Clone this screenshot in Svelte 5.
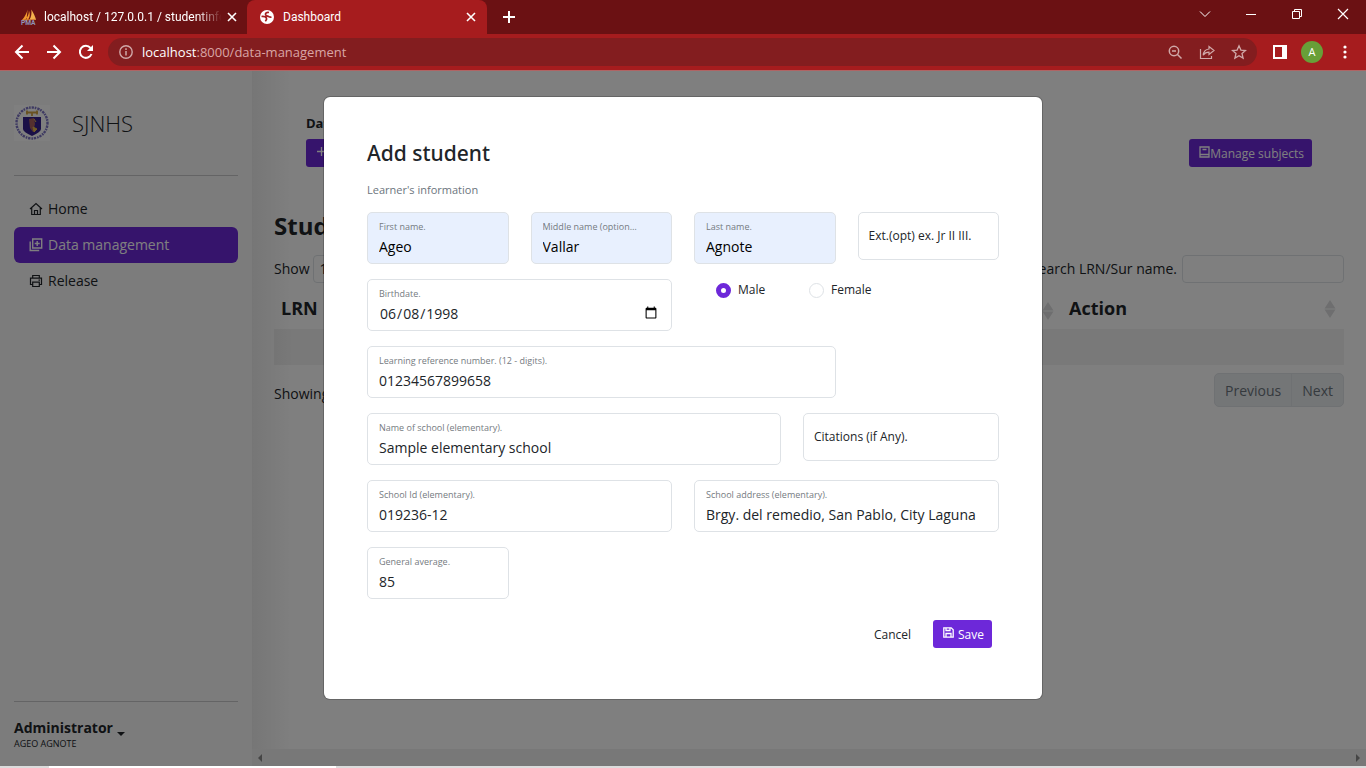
<script>
  let gender = $state('male');
  let birthdate = $state('1998-06-08');

  const names = [
    { id: 'first', label: 'First name.', value: 'Ageo' },
    { id: 'middle', label: 'Middle name (optional).', value: 'Vallar' },
    { id: 'last', label: 'Last name.', value: 'Agnote' }
  ];
</script>

{#snippet field(id, label, value, span, filled = false)}
  <div class="field span-{span}" class:filled class:empty={!value}>
    <label for={id}>{label}</label>
    <input {id} type="text" {value} />
  </div>
{/snippet}

{#snippet sorter()}
  <svg class="sorter" viewBox="0 0 12 18" aria-hidden="true"><path d="M6 0l5.500 8.500H.5zM6 18l5.500-8.500H.5z" /></svg>
{/snippet}

<div class="browser">
  <header class="tabs">
    <div class="tab first">
      <svg class="favicon" viewBox="0 0 18 18" aria-hidden="true">
        <path d="M8 1C7 5 5.500 8 2 12.500l5-1zM9.500 2c1.500 4 1 7-1 10H5.500C8 9 9.500 6 9.500 2z" fill="#f29a2e" />
        <path d="M12 1c2.500 4 4 7 5 11h-7c2-3 2.500-7 2-11z" fill="#f6b04d" />
        <path d="M2 12.500l14-1" stroke="#d9803a" />
        <text x="1" y="17.500" font-size="7" font-weight="700" fill="#9094b8">PMA</text>
      </svg>
      <span class="tab-title fade">localhost / 127.0.0.1 / studentinfo</span>
      <button class="plain" aria-label="Close tab"><svg width="10" height="10" viewBox="0 0 10 10"><path d="M1 1l8 8M9 1l-8 8" /></svg></button>
    </div>
    <div class="tab active">
      <svg class="globe" viewBox="0 0 16 16" aria-hidden="true">
        <circle cx="8" cy="8" r="7" fill="#fff" />
        <path d="M10 3.500C8 3 6.300 4 6.500 5.500S8.500 7 9.500 7.500s2 .8 3 .5M2.500 7.500c2.500-.2 4.500.5 5 1.800s-.3 2-1.200 3" stroke="#a61c1e" stroke-width="1.700" fill="none" />
      </svg>
      <span class="tab-title">Dashboard</span>
      <button class="plain" aria-label="Close tab"><svg width="10" height="10" viewBox="0 0 10 10"><path d="M1 1l8 8M9 1l-8 8" /></svg></button>
    </div>
    <button class="plain new" aria-label="New tab"><svg width="12" height="12" viewBox="0 0 12 12"><path d="M6 0v12M0 6h12" stroke-width="2" /></svg></button>
    <div class="window">
      <button class="plain" aria-label="Search tabs"><svg width="12" height="12" viewBox="0 0 12 12"><path d="M1 3.500l5 5 5-5" stroke-width="1" /></svg></button>
      <button class="plain" aria-label="Minimize"><svg width="12" height="12" viewBox="0 0 12 12"><path d="M1 6.500h10" stroke-width="1" /></svg></button>
      <button class="plain" aria-label="Restore"><svg width="12" height="12" viewBox="0 0 12 12"><path d="M1.500 3.500h7v7h-7zM3.500 3.500v-2h7v7h-2" stroke-width="1" /></svg></button>
      <button class="plain" aria-label="Close"><svg width="12" height="12" viewBox="0 0 12 12"><path d="M1 1l10 10M11 1L1 11" stroke-width="1.200" /></svg></button>
    </div>
  </header>

  <div class="toolbar">
    <button class="plain" aria-label="Back"><svg width="16" height="16" viewBox="0 0 16 16"><path d="M15 8H2M8.500 1.500L2 8l6.500 6.500" stroke-width="2" /></svg></button>
    <button class="plain" aria-label="Forward"><svg width="16" height="16" viewBox="0 0 16 16"><path d="M1 8h13M7.500 1.500L14 8l-6.500 6.500" stroke-width="2" /></svg></button>
    <button class="plain" aria-label="Reload"><svg width="16" height="16" viewBox="0 0 16 16"><path d="M13.500 10A6 6 0 1 1 12.500 4" stroke-width="2" /><path d="M15 1v6H9z" fill="#fff" stroke="none" /></svg></button>
    <div class="omnibox">
      <svg class="soft" width="14" height="14" viewBox="0 0 14 14" aria-hidden="true"><circle cx="7" cy="7" r="6.200" stroke-width="1.400" /><path d="M7 6v4.500M7 3.300v1.600" stroke-width="1.500" /></svg>
      <span class="url">localhost<span>:8000/data-management</span></span>
      <button class="plain soft" aria-label="Zoom"><svg width="16" height="16" viewBox="0 0 16 16"><circle cx="7" cy="7" r="4.700" stroke-width="1.500" /><path d="M5 7h4M10.500 10.500l4 4" stroke-width="1.500" /></svg></button>
      <button class="plain soft" aria-label="Share"><svg width="16" height="16" viewBox="0 0 16 16"><path d="M1.500 5v9.500h11V12" stroke-width="1.200" /><path d="M10 2.500l5 4-5 4V8.200c-3 0-4.500 1-5.800 3 .3-3.500 2.300-5.800 5.800-6.200z" stroke-width="1.200" /></svg></button>
      <button class="plain soft" aria-label="Bookmark"><svg width="16" height="16" viewBox="0 0 16 16"><path d="M8 1.800l1.900 4.300 4.600.4-3.500 3 1.100 4.600L8 11.700l-4.100 2.400L5 9.500l-3.500-3 4.600-.4z" stroke-width="1.300" /></svg></button>
    </div>
    <button class="plain" aria-label="Side panel"><svg width="14" height="14" viewBox="0 0 14 14"><path d="M1 1h12v12H1z" stroke-width="2" /><path d="M9 1h4v12H9z" fill="#fff" stroke="none" /></svg></button>
    <button class="avatar">A</button>
    <button class="plain" aria-label="Menu"><svg width="4" height="14" viewBox="0 0 4 14"><g fill="#fff" stroke="none"><circle cx="2" cy="2" r="1.600" /><circle cx="2" cy="7" r="1.600" /><circle cx="2" cy="12" r="1.600" /></g></svg></button>
  </div>

  <div class="page">
    <aside>
      <div class="brand">
        <svg class="seal" viewBox="0 0 36 36" aria-hidden="true">
          <path d="M0 0h36v36H0z" fill="#fff" />
          <circle cx="18" cy="18" r="15.500" fill="none" stroke="#7d75c4" stroke-width="2.400" stroke-dasharray="1.600 1 2.400 .8" />
          <path d="M12 7.500h12M13 5.500v4M23 5.500v4M18 8v3" stroke="#d2a544" stroke-width="1.800" />
          <path d="M9 12h18v12q0 3-9 7-9-4-9-7z" fill="#34208f" />
          <path d="M15 14l5-1 1 6-2 8-3-4z" fill="#a8615e" />
          <path d="M19 22l4 2-3 3zM20 14l2 3" fill="#e4b84a" stroke="#e4b84a" />
        </svg>
        <span>SJNHS</span>
      </div>
      <nav>
        <a href="#home">
          <svg viewBox="0 0 14 14" aria-hidden="true"><path d="M1 7l6-5.500L13 7M2.700 6v6.500h8.600V6M5.500 12.500V8.500h3v4" /></svg>
          Home
        </a>
        <a href="#data" class="current">
          <svg viewBox="0 0 14 14" aria-hidden="true"><path d="M3.700 1h9v9h-9zM1.200 3.500v9h9M8.200 3v5M5.700 5.500h5" stroke-width="1.400" /></svg>
          Data management
        </a>
        <a href="#release">
          <svg viewBox="0 0 14 14" aria-hidden="true"><path d="M3.700 4V1.500h6.600V4M3.700 10.500H1.500V4.200h11v6.300h-2.200M3.700 8.200h6.600v4.300H3.700zM9.500 6.200h1.500" /></svg>
          Release
        </a>
      </nav>
      <button class="account"><strong>Administrator</strong><i></i><small>AGEO AGNOTE</small></button>
    </aside>

    <main>
      <div class="content">
        <div class="actions">
          <div>
            <h6>Data</h6>
            <button class="btn" aria-label="Add student"><svg width="11" height="11" viewBox="0 0 11 11"><path d="M5.500 1v9M1 5.500h9" /></svg></button>
          </div>
          <button class="btn"><svg width="11" height="12" viewBox="0 0 11 12"><path d="M1 1h9v10H1zM1 8.500h9M3.500 3.500h4" /></svg>Manage subjects</button>
        </div>
        <h2>Students</h2>
        <div class="filters">
          <label>Show <select><option>10</option></select></label>
          <label>Search LRN/Sur name. <input type="search" /></label>
        </div>
        <table>
          <thead><tr><th class="lrn">LRN</th><th>{@render sorter()}</th><th class="last">Action {@render sorter()}</th></tr></thead>
          <tbody><tr><td colspan="3"></td></tr></tbody>
        </table>
        <div class="pager">
          <span>Showing</span>
          <div><button>Previous</button><button>Next</button></div>
        </div>
      </div>
      <div class="scrollbar"><i></i><i class="right"></i></div>
    </main>

    <div class="backdrop">
      <form class="modal" role="dialog" aria-labelledby="title">
        <h1 id="title">Add student</h1>
        <p>Learner's information</p>
        <div class="grid">
          {#each names as f}
            {@render field(f.id, f.label, f.value, 3, true)}
          {/each}
          {@render field('ext', 'Ext.(opt) ex. Jr II III.', '', 3)}
          <div class="field span-6">
            <label for="birth">Birthdate.</label>
            <input id="birth" type="date" bind:value={birthdate} />
          </div>
          <div class="radios span-6">
            <label><input type="radio" value="male" bind:group={gender} />Male</label>
            <label><input type="radio" value="female" bind:group={gender} />Female</label>
          </div>
          {@render field('lrn', 'Learning reference number. (12 - digits).', '01234567899658', 9)}
          {@render field('school', 'Name of school (elementary).', 'Sample elementary school', 8)}
          {@render field('citations', 'Citations (if Any).', '', 4)}
          {@render field('schoolid', 'School Id (elementary).', '019236-12', 6)}
          {@render field('address', 'School address (elementary).', 'Brgy. del remedio, San Pablo, City Laguna', 6)}
          {@render field('average', 'General average.', '85', 3)}
        </div>
        <footer>
          <button type="button" class="btn cancel">Cancel</button>
          <button type="button" class="btn save"><svg width="11" height="11" viewBox="0 0 11 11"><path d="M.8.8h7.400l2 2v7.400H.8zM3 .8v2.700h4V.8M3 10V6.500h5V10" /></svg>Save</button>
        </footer>
      </form>
    </div>
  </div>
  <div class="taskbar"><i></i></div>
</div>

<style>
  :global(body) { margin: 0; }
  .browser { min-height: 100vh; display: flex; flex-direction: column; font-family: "Open Sans", "Noto Sans", sans-serif; font-size: 14px; color: #212529; }
  .browser * { box-sizing: border-box; }
  button, input, select { font: inherit; color: inherit; }
  svg { fill: none; stroke: currentColor; flex: none; }
  .plain { background: none; border: 0; padding: 0; display: flex; align-items: center; justify-content: center; color: #fff; }
  .plain svg, .soft { stroke-width: 1.600; }

  .tabs { height: 34px; display: flex; background: #6b1113; color: #fff; font-family: Roboto, sans-serif; font-size: 12px; }
  .tab { width: 240px; display: flex; align-items: center; padding: 0 11px 0 12px; }
  .tab.first { width: 247px; padding: 0 10px 0 20px; }
  .tab.active { background: #a61c1e; border-radius: 8px 8px 0 0; }
  .tab-title { flex: 1; min-width: 0; overflow: hidden; white-space: nowrap; margin: 0 8px; line-height: 18px; }
  .fade { margin: 0 0 0 7px; mask-image: linear-gradient(90deg, #000 84%, transparent 97%); }
  .favicon { width: 17px; height: 18px; stroke: none; }
  .globe { width: 16px; height: 16px; stroke: none; }
  .new { width: 44px; }
  .window { margin-left: auto; display: flex; align-items: center; height: 28px; }
  .window button { width: 46px; height: 28px; }

  .toolbar { height: 37px; display: flex; align-items: center; padding: 0 13px 0 14px; gap: 16px; background: #a61c1e; border-bottom: 1px solid #b06464; }
  .omnibox { flex: 1; height: 28px; border-radius: 14px; background: #831d1f; display: flex; align-items: center; padding: 0 10px 0 11px; gap: 16px; margin-left: -2px; }
  .url { flex: 1; color: #fff; font-size: 13px; margin-left: -7px; }
  .url span { color: #d9a5a5; }
  .soft { color: #d0a8a8; }
  .avatar { width: 22px; height: 22px; padding: 0; border: 0; border-radius: 50%; background: #689f38; color: #fff; font-size: 11px; line-height: 22px; margin: 0 2px 0 -2px; }
  .toolbar > .plain:last-child { width: 16px; margin-left: -4px; }

  .page { flex: 1; display: flex; position: relative; background: #fff; }
  aside { width: 252px; padding: 0 14px; background: #f8f8f9; display: flex; flex-direction: column; }
  .brand { height: 105px; display: flex; align-items: center; gap: 22px; border-bottom: 1px solid #c8c9ca; font-size: 22px; font-weight: 300; }
  .seal { width: 36px; height: 36px; stroke: none; }
  nav { padding-top: 15px; }
  nav a { display: flex; align-items: center; gap: 5px; height: 36px; padding: 0 15px 1px; border-radius: 6px; color: inherit; text-decoration: none; }
  nav svg { width: 14px; height: 14px; stroke-width: 1.200; }
  .current { background: #6d28d9; color: #fff; }
  .account { margin-top: auto; height: 65px; border: 0; border-top: 1px solid #c8c9ca; background: none; padding: 0; text-align: left; line-height: 20px; }
  .account i { display: inline-block; border: 4px solid transparent; border-top-color: #212529; border-bottom: 0; margin-left: 4px; vertical-align: -3px; }
  .account small { display: block; font-size: 9px; line-height: 12px; }

  main { flex: 1; min-width: 0; display: flex; flex-direction: column; background: linear-gradient(90deg, #ededed, #fff 40px); }
  .content { flex: 1; padding: 42px 22px 0; }
  .actions { display: flex; justify-content: space-between; align-items: flex-end; padding: 0 32px; }
  h6 { margin: 0 0 6px; font-size: 13px; line-height: 20px; }
  h2 { margin: 43px 0 13px; font-size: 24px; line-height: 32px; }
  .btn { display: flex; align-items: center; height: 28px; padding: 0 8px 0 10px; border: 0; border-radius: 3px; background: #6d28d9; color: #fff; font-size: 12px; }
  .btn svg { margin-bottom: 3px; stroke-width: 1.300; }
  .filters, .pager { display: flex; justify-content: space-between; align-items: center; }
  .filters label { display: flex; align-items: center; gap: 5px; line-height: 26px; }
  .filters label:first-child { gap: 3px; }
  .filters select, .filters input { height: 28px; border: 1px solid #dee2e6; border-radius: 4px; background: #fff; }
  .filters select { width: 54px; padding: 0 6px; appearance: none; }
  .filters input { width: 162px; outline: none; }
  table { width: 100%; border-collapse: collapse; table-layout: fixed; margin-top: 9px; }
  th { height: 37px; padding: 0 8px 5px 7px; text-align: left; font-size: 18px; line-height: 26px; }
  .lrn { width: 12%; }
  .last { width: 282px; }
  .sorter { float: right; width: 12px; height: 18px; margin: 5px 0 0; fill: #dcdddf; stroke: none; }
  td { height: 36px; background: rgba(0, 0, 0, .05); }
  .pager { margin-top: 8px; }
  .pager > span { padding-top: 6px; }
  .pager div { display: flex; border: 1px solid #dee2e6; border-radius: 5px; background: #e9ecef; }
  .pager button { height: 32px; padding: 0 10px; border: 0; background: none; color: #6c757d; }
  .pager button + button { border-left: 1px solid #dee2e6; }
  .scrollbar { height: 17px; background: #f1f1f1; display: flex; justify-content: space-between; align-items: center; padding: 0 6px; }
  .scrollbar i { border: 4px solid transparent; border-right-color: #8b8b8b; border-left: 0; }
  .scrollbar .right { border: 4px solid transparent; border-left-color: #8b8b8b; border-right: 0; }

  .backdrop { position: absolute; inset: 0; background: rgba(0, 0, 0, .5); display: flex; justify-content: center; align-items: flex-start; padding-top: 26px; }
  .modal { width: 718px; max-width: 96%; background: #fff; border-radius: 6px; padding: 40px 43px 51px; box-shadow: 0 0 0 1px rgba(0, 0, 0, .2); }
  h1 { margin: 0; font-family: "Noto Sans", sans-serif; font-size: 21px; font-weight: 500; line-height: 32px; }
  p { margin: 11px 0 12px; font-size: 11px; line-height: 20px; color: #6c757d; }
  .grid { display: grid; grid-template-columns: repeat(12, 1fr); column-gap: 22px; row-gap: 15px; }
  .span-3 { grid-column: span 3; }
  .span-4 { grid-column: span 4; }
  .span-6 { grid-column: span 6; }
  .span-8 { grid-column: span 8; }
  .span-9 { grid-column: 1 / span 9; }
  .field { display: grid; grid-template-columns: 100%; height: 52px; }
  .field label { grid-area: 1 / 1; z-index: 1; pointer-events: none; margin: 8px 33px 0 12px; font-size: 9px; line-height: 14px; color: #757b81; white-space: nowrap; overflow: hidden; text-overflow: ellipsis; align-self: start; }
  .field input { grid-area: 1 / 1; width: 100%; height: 100%; min-width: 0; border: 1px solid #dee2e6; border-radius: 5px; background: #fff; padding: 18px 11px 2px; outline: none; }
  .filled input { background: #e8f0fe; color: #000; }
  .empty { height: 48px; }
  .empty label { align-self: center; margin: 0 11px; font-size: 12px; line-height: 18px; color: #212529; }
  .radios { display: flex; align-items: flex-start; padding-left: 22px; font-size: 12px; }
  .radios label { width: 93px; display: flex; align-items: center; gap: 7px; line-height: 22px; }
  .radios input { appearance: none; width: 15px; height: 15px; margin: 0; border: 1px solid #dee2e6; border-radius: 50%; }
  .radios input:checked { border: 5px solid #6d28d9; }
  footer { display: flex; justify-content: flex-end; margin-top: 21px; padding-right: 7px; gap: 14px; }
  .cancel { background: none; color: #212529; }
  .save { gap: 4px; font-weight: 500; }

  .taskbar { height: 2px; background: #dcdcdc; display: flex; }
  .taskbar i { width: 21%; margin-left: 49px; background: #fff; }
</style>
